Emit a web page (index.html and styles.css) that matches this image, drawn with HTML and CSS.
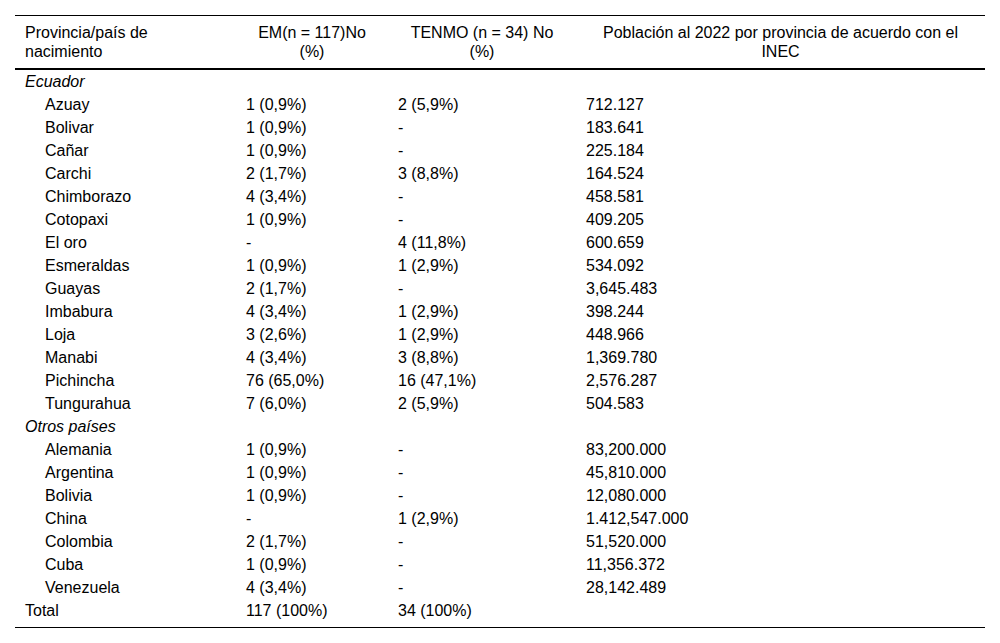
FILE: index.html
```html
<!DOCTYPE html>
<html lang="es">
<head>
<meta charset="utf-8">
<link rel="stylesheet" href="styles.css">
</head>
<body>
<table class="tbl">
  <colgroup>
    <col class="c1"><col class="c2"><col class="c3"><col class="c4">
  </colgroup>
  <thead>
    <tr>
      <th class="left">Provincia/país de<br>nacimiento</th>
      <th>EM(n = 117)No<br>(%)</th>
      <th>TENMO (n = 34) No<br>(%)</th>
      <th>Población al 2022 por provincia de acuerdo con el<br>INEC</th>
    </tr>
  </thead>
  <tbody>
    <tr><td class="group">Ecuador</td><td></td><td></td><td></td></tr>
    <tr><td class="ind">Azuay</td><td>1 (0,9%)</td><td>2 (5,9%)</td><td>712.127</td></tr>
    <tr><td class="ind">Bolivar</td><td>1 (0,9%)</td><td>-</td><td>183.641</td></tr>
    <tr><td class="ind">Cañar</td><td>1 (0,9%)</td><td>-</td><td>225.184</td></tr>
    <tr><td class="ind">Carchi</td><td>2 (1,7%)</td><td>3 (8,8%)</td><td>164.524</td></tr>
    <tr><td class="ind">Chimborazo</td><td>4 (3,4%)</td><td>-</td><td>458.581</td></tr>
    <tr><td class="ind">Cotopaxi</td><td>1 (0,9%)</td><td>-</td><td>409.205</td></tr>
    <tr><td class="ind">El oro</td><td>-</td><td>4 (11,8%)</td><td>600.659</td></tr>
    <tr><td class="ind">Esmeraldas</td><td>1 (0,9%)</td><td>1 (2,9%)</td><td>534.092</td></tr>
    <tr><td class="ind">Guayas</td><td>2 (1,7%)</td><td>-</td><td>3,645.483</td></tr>
    <tr><td class="ind">Imbabura</td><td>4 (3,4%)</td><td>1 (2,9%)</td><td>398.244</td></tr>
    <tr><td class="ind">Loja</td><td>3 (2,6%)</td><td>1 (2,9%)</td><td>448.966</td></tr>
    <tr><td class="ind">Manabi</td><td>4 (3,4%)</td><td>3 (8,8%)</td><td>1,369.780</td></tr>
    <tr><td class="ind">Pichincha</td><td>76 (65,0%)</td><td>16 (47,1%)</td><td>2,576.287</td></tr>
    <tr><td class="ind">Tungurahua</td><td>7 (6,0%)</td><td>2 (5,9%)</td><td>504.583</td></tr>
    <tr><td class="group">Otros países</td><td></td><td></td><td></td></tr>
    <tr><td class="ind">Alemania</td><td>1 (0,9%)</td><td>-</td><td>83,200.000</td></tr>
    <tr><td class="ind">Argentina</td><td>1 (0,9%)</td><td>-</td><td>45,810.000</td></tr>
    <tr><td class="ind">Bolivia</td><td>1 (0,9%)</td><td>-</td><td>12,080.000</td></tr>
    <tr><td class="ind">China</td><td>-</td><td>1 (2,9%)</td><td>1.412,547.000</td></tr>
    <tr><td class="ind">Colombia</td><td>2 (1,7%)</td><td>-</td><td>51,520.000</td></tr>
    <tr><td class="ind">Cuba</td><td>1 (0,9%)</td><td>-</td><td>11,356.372</td></tr>
    <tr><td class="ind">Venezuela</td><td>4 (3,4%)</td><td>-</td><td>28,142.489</td></tr>
    <tr class="last"><td>Total</td><td>117 (100%)</td><td>34 (100%)</td><td></td></tr>
  </tbody>
</table>
</body>
</html>
```

FILE: styles.css
```css
html, body {
  margin: 0;
  padding: 0;
  background: #fff;
}
body {
  padding: 15px 15px 0 15px;
  font-family: "Liberation Sans", Arial, sans-serif;
  font-size: 16px;
  color: #000;
}
.tbl {
  width: 970px;
  border-collapse: collapse;
  table-layout: fixed;
  border-top: 1px solid #000;
  border-bottom: 1px solid #000;
}
.c1 { width: 221px; }
.c2 { width: 152px; }
.c3 { width: 188px; }
.c4 { width: 409px; }
.tbl th {
  font-weight: normal;
  text-align: center;
  vertical-align: top;
  line-height: 19px;
  padding: 7px 10px 7px 10px;
  border-bottom: 2px solid #000;
}
.tbl th.left { text-align: left; }
.tbl td {
  line-height: 19px;
  padding: 2px 10px;
  text-align: left;
  vertical-align: top;
}
.tbl td.group { font-style: italic; }
.tbl td.ind { padding-left: 30px; }
.tbl tr.last td { padding-bottom: 7px; }
```
